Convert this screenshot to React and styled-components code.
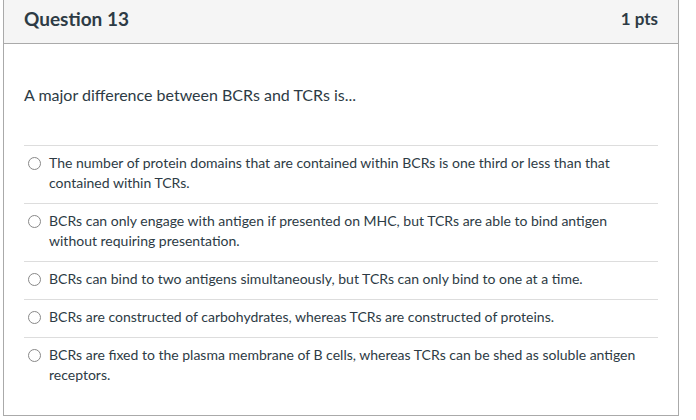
import styled, { createGlobalStyle } from "styled-components";

const GlobalStyle = createGlobalStyle`
  body {
    margin: 0;
    background: #fff;
    font-family: Lato, "Noto Sans", sans-serif;
    color: #2d3b45;
  }
`;

const Card = styled.div`
  width: 674px;
  margin: -1px 0 0 3px;
  border: 1px solid #aaa;
  background: #fff;
`;

const Header = styled.div`
  display: flex;
  align-items: center;
  justify-content: space-between;
  height: 37px;
  padding: 0 20px 6px;
  background: #f5f5f5;
  border-bottom: 1px solid #aaa;
`;

const Title = styled.h2`
  margin: 0;
  font-size: 19px;
  font-weight: 700;
`;

const Points = styled.span`
  font-size: 17px;
  font-weight: 700;
`;

const Body = styled.div`
  padding: 39px 20px 20px;
`;

const QuestionText = styled.p`
  margin: 0 0 39px;
  font-size: 16px;
  line-height: 23px;
`;

const Answers = styled.div`
  display: flex;
  flex-direction: column;
`;

const Answer = styled.label`
  display: flex;
  align-items: flex-start;
  gap: 8px;
  padding: 7px 4px 10px;
  border-top: 1px solid #ddd;
  font-size: 14px;
  line-height: 20px;
`;

const Radio = styled.span`
  flex: none;
  width: 11px;
  height: 11px;
  margin-top: 4px;
  border: 1px solid #888;
  border-radius: 50%;
  background: #fff;
`;

const answers = [
  "The number of protein domains that are contained within BCRs is one third or less than that contained within TCRs.",
  "BCRs can only engage with antigen if presented on MHC, but TCRs are able to bind antigen without requiring presentation.",
  "BCRs can bind to two antigens simultaneously, but TCRs can only bind to one at a time.",
  "BCRs are constructed of carbohydrates, whereas TCRs are constructed of proteins.",
  "BCRs are fixed to the plasma membrane of B cells, whereas TCRs can be shed as soluble antigen receptors.",
];

const App = () => (
  <>
    <GlobalStyle />
    <Card>
      <Header>
        <Title>Question 13</Title>
        <Points>1 pts</Points>
      </Header>
      <Body>
        <QuestionText>A major difference between BCRs and TCRs is...</QuestionText>
        <Answers>
          {answers.map((text) => (
            <Answer key={text}>
              <Radio />
              <span>{text}</span>
            </Answer>
          ))}
        </Answers>
      </Body>
    </Card>
  </>
);

export default App;
